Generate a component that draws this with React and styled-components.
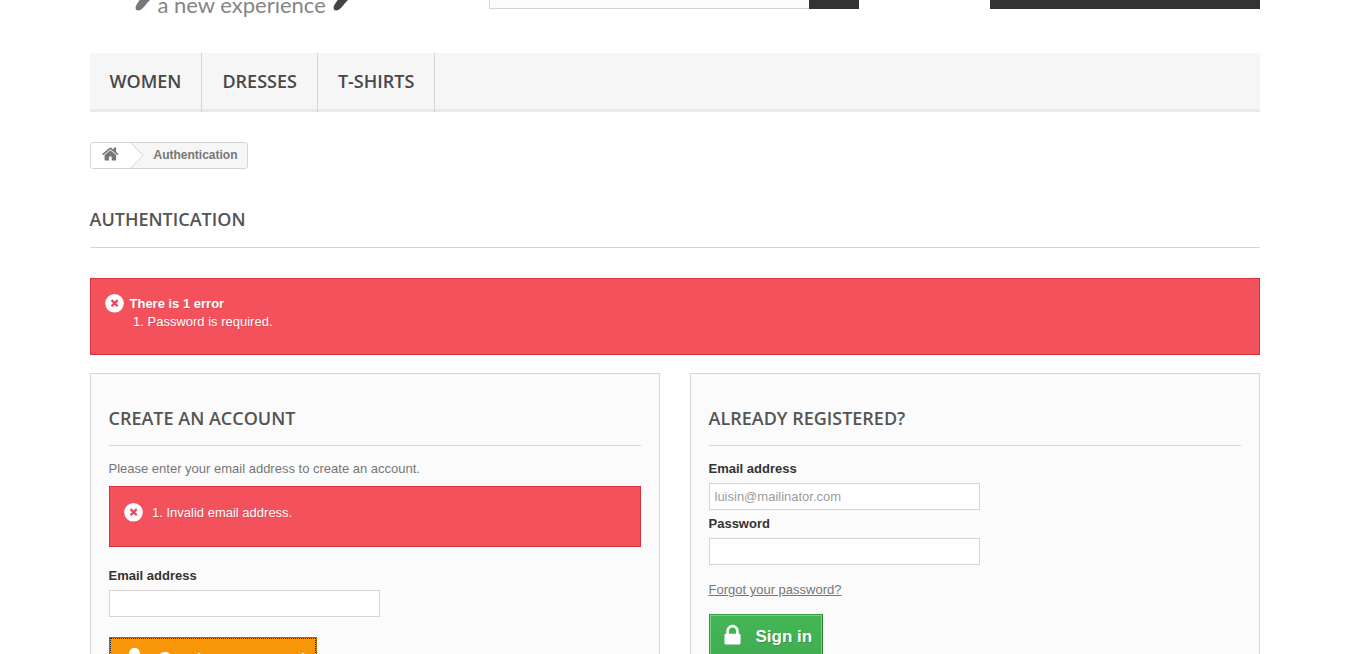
import React from 'react';
import styled, { createGlobalStyle, css } from 'styled-components';

const sans = 'Arial, "Liberation Sans", Helvetica, sans-serif';
const display = '"Open Sans", "Noto Sans", sans-serif';
const line = '#d6d4d4';

const GlobalStyle = createGlobalStyle`
  *, *::before, *::after { box-sizing: border-box; }
  body {
    margin: 0;
    background: #fff;
    color: #777;
    font: 13px/18px ${sans};
  }
  input, button { font-family: inherit; }
  h1, h3, p, ol, ul { margin: 0; padding: 0; }
`;

const Page = styled.div`
  height: 100vh;
  overflow: hidden;
`;

const Container = styled.div`
  max-width: 1170px;
  margin: 0 auto;
`;

/* The header is scrolled: only its lower edge stays in view. */
const Header = styled.header`
  display: grid;
  grid-template-columns: 399fr 370fr 401fr;
  align-content: end;
  align-items: end;
  height: 53px;
  padding-bottom: 35px;
  overflow: hidden;
`;

const Logo = styled.a`
  display: flex;
  align-items: flex-end;
  gap: 7px;
  padding-left: 45px;
  color: #858585;
  font: 400 22px/26px Lato, ${sans};
  text-decoration: none;
`;

const Slash = styled.svg`
  width: 16px;
  height: 24px;
  margin-bottom: 7px;
`;

const Search = styled.form`
  display: flex;
  height: 43px;
  margin-bottom: 9px;
`;

const SearchInput = styled.input`
  flex: 1;
  min-width: 0;
  border: 1px solid ${line};
  border-right: 0;
  border-radius: 0;
  background: #fbfbfb;
`;

const SearchButton = styled.button`
  width: 50px;
  border: 0;
  background: #333;
`;

const Cart = styled.a`
  justify-self: end;
  width: 270px;
  height: 43px;
  margin-bottom: 9px;
  background: #333;
`;

const Menu = styled.ul`
  display: flex;
  list-style: none;
  background: #f6f6f6;
  box-shadow: inset 0 -3px #e9e9e9;
`;

const MenuItem = styled.li`
  border-right: 1px solid ${line};
`;

const MenuLink = styled.a`
  display: block;
  padding: 17px 20px 20px;
  color: #484848;
  font: 600 18px/22px ${display};
  text-decoration: none;
  text-transform: uppercase;
`;

const Breadcrumb = styled.nav`
  display: inline-flex;
  height: 27px;
  margin: 30px 0 39px;
  overflow: hidden;
  border: 1px solid ${line};
  border-radius: 3px;
  background: #f6f6f6;
  font-weight: 700;
  font-size: 12px;
  line-height: 24px;
  vertical-align: top;
`;

const HomeLink = styled.a`
  display: flex;
  padding: 2px 10px 0 11px;
  background: #fff;
  color: #777;
`;

const Arrow = styled.svg`
  width: 14px;
  height: 25px;
`;

const Crumb = styled.span`
  padding: 0 9px 0 10px;
`;

const PageHeading = styled.h1`
  margin-bottom: 30px;
  padding-bottom: 17px;
  border-bottom: 1px solid ${line};
  color: #555454;
  font: 600 18px/22px ${display};
  text-transform: uppercase;
`;

const Alert = styled.div`
  display: flex;
  align-items: ${(p) => (p.$single ? 'center' : 'flex-start')};
  gap: 6px;
  min-height: 61px;
  margin-bottom: ${(p) => (p.$single ? 19 : 18)}px;
  padding: 15px 14px 23px;
  border: 1px solid #d4323d;
  background: #f3515c;
  color: #fff;
  text-shadow: 1px 1px rgba(0, 0, 0, 0.1);
`;

const AlertIcon = styled.svg`
  flex: none;
  width: 19px;
  height: 19px;
`;

const AlertBody = styled.div`
  padding-top: 1px;
`;

const ErrorList = styled.ol`
  && { padding-left: 18px; }
`;

const Columns = styled.div`
  display: grid;
  grid-template-columns: 1fr 1fr;
  gap: 30px;
`;

const Box = styled.form`
  padding: 32px 18px 20px;
  border: 1px solid ${line};
  background: #fbfbfb;
`;

const BoxHeading = styled.h3`
  && { margin-bottom: 13px; }
  padding-bottom: 14px;
  border-bottom: 1px solid ${line};
  color: #555454;
  font: 600 18px/25px ${display};
  text-transform: uppercase;
`;

const Intro = styled.p`
  && { margin-bottom: 7px; }
  line-height: 20px;
`;

const Field = styled.div`
  display: flex;
  flex-direction: column;
  align-items: flex-start;
  gap: 4px;
  margin-bottom: 4px;
`;

const Label = styled.label`
  color: #333;
  font-weight: 700;
  line-height: 20px;
`;

const Input = styled.input`
  width: 271px;
  height: 27px;
  padding: 3px 5px;
  border: 1px solid ${line};
  border-radius: 0;
  background: #fff;
  color: #9c9b9b;
  font-size: 13px;
  line-height: 18px;
`;

const Forgot = styled.p`
  && { margin: 15px 0 14px; }
  line-height: 20px;
  a { color: #777; text-decoration: underline; }
`;

const Button = styled.button`
  display: inline-flex;
  align-items: flex-start;
  height: 45px;
  border: 1px solid;
  color: #fff;
  font-weight: 700;
  font-size: 17px;
  text-shadow: 1px 1px rgba(0, 0, 0, 0.2);
  ${(p) =>
    p.$kind === 'signin'
      ? css`
          gap: 11px;
          padding: 8px 10px 0;
          line-height: 27px;
          border-color: #399a49 #247f32 #1a6d27 #399a49;
          background: linear-gradient(#43b754, #42ac52);
          box-shadow: inset 0 0 0 1px #74d578;
        `
      : css`
          gap: 12px;
          margin-top: 16px;
          padding: 8px 10px 0 12px;
          line-height: 25px;
          border-color: #a8680c;
          background: #f89609;
          outline: 1px dotted #222;
          outline-offset: -2px;
        `}
`;

const Glyph = styled.svg`
  flex: none;
  width: ${(p) => p.$size}px;
  height: ${(p) => p.$size}px;
  fill: currentColor;
`;

const glyphs = {
  home: 'M1408 992v480q0 26-19 45t-45 19h-384v-384h-256v384h-384q-26 0-45-19t-19-45v-480q0-1 .5-3t.5-3l575-474 575 474q1 2 1 6zm223-69l-62 74q-8 9-21 11h-3q-13 0-21-7l-692-577-692 577q-12 8-24 7-13-2-21-11l-62-74q-8-10-7-23.5t11-21.5l719-599q32-26 76-26t76 26l244 204v-195q0-14 9-23t23-9h192q14 0 23 9t9 23v408l219 182q10 8 11 21.5t-7 23.5z',
  lock: 'M640 768h512v-192q0-106-75-181t-181-75-181 75-75 181v192zm832 96v576q0 40-28 68t-68 28h-960q-40 0-68-28t-28-68v-576q0-40 28-68t68-28h32v-192q0-184 132-316t316-132 316 132 132 316v192h32q40 0 68 28t28 68z',
  user: 'M1536 1399q0 109-62.5 187t-150.5 78h-854q-88 0-150.5-78t-62.5-187q0-85 8.5-160.5t31.5-152 58.5-131 94-89 134.5-34.5q131 128 313 128t313-128q76 0 134.5 34.5t94 89 58.5 131 31.5 152 8.5 160.5zm-256-887q0 159-112.5 271.5t-271.5 112.5-271.5-112.5-112.5-271.5 112.5-271.5 271.5-112.5 271.5 112.5 112.5 271.5z',
};

const Icon = ({ name, size }) => (
  <Glyph $size={size} viewBox="0 0 1792 1792" aria-hidden="true">
    <path d={glyphs[name]} />
  </Glyph>
);

const LogoSlash = ({ color }) => (
  <Slash viewBox="0 0 16 24" aria-hidden="true">
    <path d="M3 23.5C0 23.5 0 20 2 17L12 2L22 6L13 15C9 20 6 23.5 3 23.5Z" fill={color} />
  </Slash>
);

const ErrorIcon = () => (
  <AlertIcon viewBox="0 0 19 19" aria-hidden="true">
    <circle cx="9.5" cy="9.3" r="9.3" fill="#fff" />
    <path d="M6.5 6.1L12.7 12.3M12.7 6.1L6.5 12.3" stroke="#e8495a" strokeWidth="2.3" />
  </AlertIcon>
);

export default function App() {
  return (
    <Page>
      <GlobalStyle />
      <Container>
        <Header>
          <Logo href="#">
            <LogoSlash color="#777776" />
            a new experience
            <LogoSlash color="#444" />
          </Logo>
          <Search>
            <SearchInput type="search" aria-label="Search" />
            <SearchButton type="button" aria-label="Search" />
          </Search>
          <Cart href="#" aria-label="Cart" />
        </Header>

        <Menu>
          {['Women', 'Dresses', 'T-shirts'].map((name) => (
            <MenuItem key={name}>
              <MenuLink href="#">{name}</MenuLink>
            </MenuItem>
          ))}
        </Menu>

        <Breadcrumb aria-label="Breadcrumb">
          <HomeLink href="#" aria-label="Home">
            <Icon name="home" size={18} />
          </HomeLink>
          <Arrow viewBox="0 0 14 25" aria-hidden="true">
            <path d="M0 0H1L13 12.5L1 25H0Z" fill="#fff" />
            <path d="M1 0L13 12.5L1 25" fill="none" stroke={line} />
          </Arrow>
          <Crumb>Authentication</Crumb>
        </Breadcrumb>

        <PageHeading>Authentication</PageHeading>

        <Alert role="alert">
          <ErrorIcon />
          <AlertBody>
            <strong>There is 1 error</strong>
            <ErrorList>
              <li>Password is required.</li>
            </ErrorList>
          </AlertBody>
        </Alert>

        <Columns>
          <Box>
            <BoxHeading>Create an account</BoxHeading>
            <Intro>Please enter your email address to create an account.</Intro>
            <Alert $single role="alert">
              <ErrorIcon />
              <AlertBody>
                <ErrorList>
                  <li>Invalid email address.</li>
                </ErrorList>
              </AlertBody>
            </Alert>
            <Field>
              <Label htmlFor="email-create">Email address</Label>
              <Input id="email-create" type="text" />
            </Field>
            <Button type="button" $kind="create">
              <Icon name="user" size={25} />
              Create an account
            </Button>
          </Box>

          <Box>
            <BoxHeading>Already registered?</BoxHeading>
            <Field>
              <Label htmlFor="email">Email address</Label>
              <Input id="email" type="text" defaultValue="luisin@mailinator.com" />
            </Field>
            <Field>
              <Label htmlFor="password">Password</Label>
              <Input id="password" type="password" />
            </Field>
            <Forgot>
              <a href="#">Forgot your password?</a>
            </Forgot>
            <Button type="button" $kind="signin">
              <Icon name="lock" size={25} />
              Sign in
            </Button>
          </Box>
        </Columns>
      </Container>
    </Page>
  );
}
